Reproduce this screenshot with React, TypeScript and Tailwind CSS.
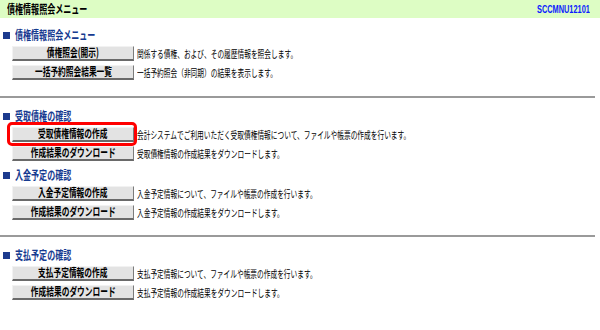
import React from "react";

type Row = { label: string; desc: string; highlight?: boolean };

const font = { fontFamily: '"Noto Sans CJK JP", "Noto Sans", sans-serif' };

function Heading({ title, className }: { title: string; className: string }) {
  return (
    <div className={`flex items-center h-[14px] pl-[3px] ${className}`}>
      <span className="w-[7px] h-[7px] bg-[#1c3a8e] shrink-0" />
      <span className="ml-[5px] inline-block origin-left scale-x-[0.67] whitespace-nowrap text-[12px] leading-none font-bold text-[#163a90]">
        {title}
      </span>
    </div>
  );
}

function ButtonRow({ row, className }: { row: Row; className: string }) {
  return (
    <div className={`flex items-center h-[15px] pl-[12px] gap-[3px] ${className}`}>
      <div className="relative shrink-0">
        <button className="flex items-center justify-center w-[122px] h-[15px] bg-[#e3e3e3] border border-t-[#f2f2f2] border-l-[#f2f2f2] border-r-[#7c7c7c] border-b-2 border-b-[#6a6a6a] p-0">
          <span className="inline-block origin-center scale-x-[0.67] whitespace-nowrap text-[11.5px] leading-none font-semibold text-black">
            {row.label}
          </span>
        </button>
        {row.highlight && (
          <span className="absolute -left-[5px] -top-[5px] -right-[3px] -bottom-[4px] border-[3px] border-[#ff0000] rounded-[5px] pointer-events-none" />
        )}
      </div>
      <span className="inline-block shrink-0 origin-left scale-x-[0.67] whitespace-nowrap text-[10px] leading-none text-black">
        {row.desc}
      </span>
    </div>
  );
}

export default function App() {
  return (
    <div className="w-[600px] h-[330px] bg-white overflow-hidden" style={font}>
      <div className="flex items-center justify-between h-[18px] bg-[#ddfdc4] pl-[7px] pr-[10px]">
        <span className="inline-block origin-left scale-x-[0.67] whitespace-nowrap text-[12px] leading-none font-bold text-black">
          債権情報照会メニュー
        </span>
        <span
          className="inline-block origin-right scale-x-[0.67] whitespace-nowrap text-[11px] leading-none font-bold text-[#0a1cff]"
          style={{ fontFamily: '"Liberation Sans", Arial, sans-serif' }}
        >
          SCCMNU12101
        </span>
      </div>

      <Heading title="債権情報照会メニュー" className="mt-[10px]" />
      <ButtonRow row={{ label: "債権照会(開示)", desc: "関係する債権、および、その履歴情報を照会します。" }} className="mt-[4px]" />
      <ButtonRow row={{ label: "一括予約照会結果一覧", desc: "一括予約照会（非同期）の結果を表示します。" }} className="mt-[4px]" />

      <div className="mt-[16px] h-[2px] w-[595px] bg-[#9a9a9a]" />

      <Heading title="受取債権の確認" className="mt-[11px]" />
      <ButtonRow
        row={{
          label: "受取債権情報の作成",
          desc: "会計システムでご利用いただく受取債権情報について、ファイルや帳票の作成を行います。",
          highlight: true,
        }}
        className="mt-[4px]"
      />
      <ButtonRow row={{ label: "作成結果のダウンロード", desc: "受取債権情報の作成結果をダウンロードします。" }} className="mt-[4px]" />

      <Heading title="入金予定の確認" className="mt-[7px]" />
      <ButtonRow row={{ label: "入金予定情報の作成", desc: "入金予定情報について、ファイルや帳票の作成を行います。" }} className="mt-[4px]" />
      <ButtonRow row={{ label: "作成結果のダウンロード", desc: "入金予定情報の作成結果をダウンロードします。" }} className="mt-[4px]" />

      <div className="mt-[15px] h-[2px] w-[595px] bg-[#9a9a9a]" />

      <Heading title="支払予定の確認" className="mt-[11px]" />
      <ButtonRow row={{ label: "支払予定情報の作成", desc: "支払予定情報について、ファイルや帳票の作成を行います。" }} className="mt-[4px]" />
      <ButtonRow row={{ label: "作成結果のダウンロード", desc: "支払予定情報の作成結果をダウンロードします。" }} className="mt-[4px]" />
    </div>
  );
}
